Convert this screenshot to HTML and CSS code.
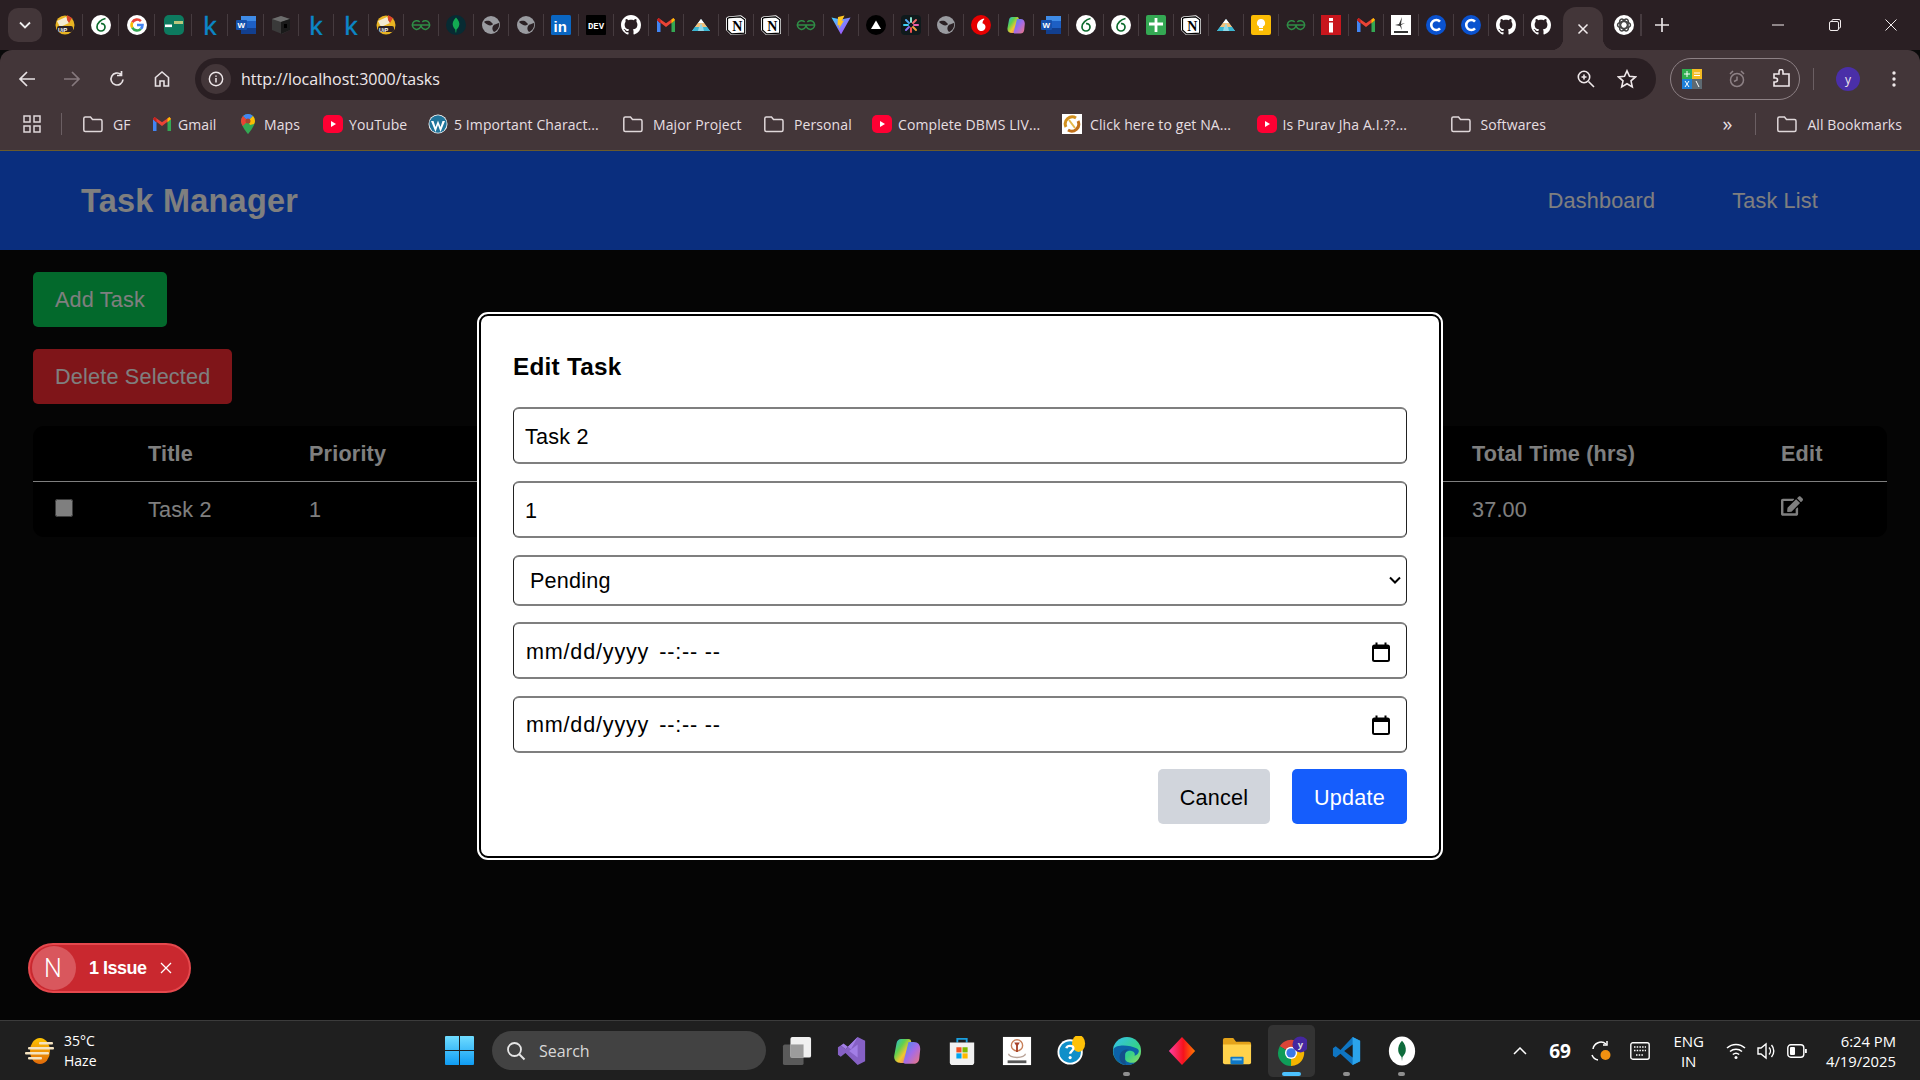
FILE: index.html
```html
<!DOCTYPE html>
<html lang="en">
<head>
<meta charset="utf-8">
<title>Task Manager</title>
<link rel="stylesheet" href="styles.css">
</head>
<body>
<svg class="defs" width="0" height="0" aria-hidden="true">
  <defs>
    <linearGradient id="g-copilot" x1="0" y1="0" x2="1" y2="1"><stop offset="0" stop-color="#1fb6e8"/><stop offset=".35" stop-color="#5fd04f"/><stop offset=".6" stop-color="#f3c530"/><stop offset="1" stop-color="#e0528f"/></linearGradient>
    <linearGradient id="g-copilot2" x1="0" y1="0" x2="1" y2="1"><stop offset="0" stop-color="#3a8df0"/><stop offset=".5" stop-color="#a36be8"/><stop offset="1" stop-color="#f0767a"/></linearGradient>
    <linearGradient id="g-vite" x1="0" y1="0" x2="1" y2="1"><stop offset="0" stop-color="#41d1ff"/><stop offset="1" stop-color="#bd34fe"/></linearGradient>
    <linearGradient id="g-diamond" x1="0" y1="0" x2="1" y2="0"><stop offset="0" stop-color="#ff3fa4"/><stop offset=".55" stop-color="#f5121d"/><stop offset="1" stop-color="#ff7a00"/></linearGradient>
    <linearGradient id="g-edge" x1="0" y1="0" x2="1" y2="1"><stop offset="0" stop-color="#35c1f1"/><stop offset=".6" stop-color="#34d08a"/><stop offset="1" stop-color="#9ee05a"/></linearGradient>
    <linearGradient id="g-win" x1="0" y1="0" x2="0" y2="1"><stop offset="0" stop-color="#6fdcff"/><stop offset="1" stop-color="#0f9cf3"/></linearGradient>
    <linearGradient id="g-sun" x1="0" y1="0" x2="0" y2="1"><stop offset="0" stop-color="#ffc400"/><stop offset="1" stop-color="#e0690b"/></linearGradient>
    <symbol id="i-ui" viewBox="0 0 20 20"><circle cx="10" cy="10" r="9.5" fill="#e9b422"/><path d="M2 6l9-4 3 6-9 4z" fill="#f3ead2"/><path d="M12 0l5 3-3 5-2-3z" fill="#d8432a"/><rect x="2" y="11" width="16" height="6" rx="2" fill="#2b2024"/><text x="3" y="16.5" class="t-ui">UiP</text></symbol>
    <symbol id="i-leaf" viewBox="0 0 20 20"><circle cx="10" cy="10" r="10" fill="#fff"/><path d="M14.5 3.5C10 4.5 6 8 6 12a4 4 0 1 0 8 0c0-2.2-1.8-3.800-4-3.300" fill="none" stroke="#0d6b2e" stroke-width="1.700"/></symbol>
    <symbol id="i-google" viewBox="0 0 20 20"><circle cx="10" cy="10" r="10" fill="#fff"/><g fill="none" stroke-width="2.600"><path d="M5.300 7.300A5.500 5.500 0 0 1 13.900 6.100" stroke="#ea4335"/><path d="M5.300 7.300A5.500 5.500 0 0 0 5.300 12.700" stroke="#fbbc05"/><path d="M5.300 12.700A5.500 5.500 0 0 0 13.900 13.900" stroke="#34a853"/><path d="M13.900 13.900A5.500 5.500 0 0 0 15.500 10H10" stroke="#4285f4"/></g></symbol>
    <symbol id="i-green" viewBox="0 0 20 20"><rect width="20" height="20" rx="5" fill="#0d7a5f"/><rect x="1" y="9.500" width="7" height="2.600" fill="#fff"/><rect x="10" y="6" width="9" height="3" fill="#b9c77e"/></symbol>
    <symbol id="i-k" viewBox="0 0 20 20"><text x="3.500" y="19.500" class="t-k">k</text></symbol>
    <symbol id="i-word" viewBox="0 0 20 20"><rect x="5" y="1" width="15" height="18" rx="1" fill="#1d5fc4"/><rect x="5" y="1" width="15" height="5" fill="#3f8be6"/><rect x="5" y="13" width="15" height="6" fill="#123f8f"/><rect y="5" width="11" height="10" rx="1" fill="#1551ad"/><text x="1.500" y="13" class="t-w">W</text></symbol>
    <symbol id="i-cube" viewBox="0 0 20 20"><path d="M10 1l9 3v11l-8 4-10-4V4z" fill="#3a3a3a"/><path d="M1 4l9 3 9-3-9-3z" fill="#6d6d6d"/><path d="M10 7v12l9-4V4z" fill="#1a1a1a"/><rect x="13" y="9" width="3" height="4" fill="#000"/></symbol>
    <symbol id="i-gfg" viewBox="0 0 20 20"><g fill="none" stroke="#2f8d46" stroke-width="1.500"><path d="M2 10h16"/><path d="M10 10a4.300 4.300 0 1 1-1.300-3"/><path d="M10 10a4.300 4.300 0 1 0 1.300-3"/></g></symbol>
    <symbol id="i-mongo" viewBox="0 0 20 20"><circle cx="10" cy="10" r="10" fill="#072b33"/><path d="M10 2.500c3 3 4 6 3 8.500-.6 1.800-2 3-2.500 3.500l-.3 3h-.6l-.3-3C8.800 14 7.600 12.800 7 11c-1-2.500 0-5.500 3-8.500z" fill="#13aa52"/></symbol>
    <symbol id="i-globe" viewBox="0 0 20 20"><circle cx="10" cy="10" r="9" fill="#9a9ba0"/><path d="M3 7c3-2 6-1 7 0s3 2 1 3-5 0-8-3zM18 8c-2 1-5 1-6 3s-1 4 1 6c3-1 6-5 5-9z" fill="#2b2024"/></symbol>
    <symbol id="i-in" viewBox="0 0 20 20"><rect width="20" height="20" rx="1.500" fill="#0a66c2"/><text x="2.500" y="16.500" class="t-in">in</text></symbol>
    <symbol id="i-dev" viewBox="0 0 20 20"><rect width="20" height="20" rx="1" fill="#000"/><text x="10" y="13.500" class="t-dev">DEV</text></symbol>
    <symbol id="i-gh" viewBox="0 0 16 16"><path fill="#fff" d="M8 0C3.58 0 0 3.58 0 8c0 3.54 2.29 6.53 5.47 7.59.4.07.55-.17.55-.38 0-.19-.01-.82-.01-1.49-2.01.37-2.53-.49-2.69-.94-.09-.23-.48-.94-.82-1.13-.28-.15-.68-.52-.01-.53.63-.01 1.08.58 1.23.82.72 1.21 1.87.87 2.33.66.07-.52.28-.87.51-1.07-1.78-.2-3.64-.89-3.64-3.95 0-.87.31-1.59.82-2.15-.08-.2-.36-1.02.08-2.12 0 0 .67-.21 2.2.82.64-.18 1.32-.27 2-.27.68 0 1.36.09 2 .27 1.53-1.04 2.2-.82 2.2-.82.44 1.1.16 1.92.08 2.12.51.56.82 1.27.82 2.15 0 3.07-1.87 3.75-3.65 3.95.29.25.54.73.54 1.48 0 1.07-.01 1.93-.01 2.2 0 .21.15.46.55.38A8.013 8.013 0 0016 8c0-4.42-3.58-8-8-8z"/></symbol>
    <symbol id="i-gmail" viewBox="0 0 20 20"><path d="M1 5v12h3.500V8.500z" fill="#4285f4"/><path d="M19 5v12h-3.500V8.500z" fill="#34a853"/><path d="M1 5l9 7 9-7-1.500-2L10 8.300 2.500 3z" fill="#ea4335"/><path d="M1 5l1.500-2 2 1.500v4z" fill="#c5221f"/><path d="M19 5l-1.500-2-2 1.500v4z" fill="#fbbc04"/></symbol>
    <symbol id="i-pyr" viewBox="0 0 20 20"><path d="M10 4l9 12H1z" fill="#8fd8e8"/><path d="M10 4l3 4H7z" fill="#fff"/><path d="M7 8h3l-1.500 4H4zM13 8l3 4h-4.500L10 8z" fill="#f3c07a"/><path d="M1 16h6l1-4H4zM19 16h-6l-1-4h4z" fill="#39b6d2"/></symbol>
    <symbol id="i-notion" viewBox="0 0 20 20"><path d="M2 1.500L15 .3 20 4v15l-15 1-5-5V3z" fill="#fff"/><path d="M3.300 2.700L14.500 1.800 18.700 4.700v13.400l-13 .8L1.500 15V3.500z" fill="#fff" stroke="#000" stroke-width="1.200"/><text x="11.300" y="16" class="t-n">N</text></symbol>
    <symbol id="i-vite" viewBox="0 0 20 20"><path d="M.5 2.500L10 19.500l9.500-17-9.500 2z" fill="url(#g-vite)"/><path d="M13.500.500L7 2l-.5 8.500 2-.5-.5 3.500 5-8-2.200.4z" fill="#ffc61f"/></symbol>
    <symbol id="i-tri" viewBox="0 0 20 20"><circle cx="10" cy="10" r="10" fill="#000"/><path d="M10 5.500l5 8.500H5z" fill="#fff"/></symbol>
    <symbol id="i-ast" viewBox="0 0 20 20"><rect width="20" height="20" rx="4" fill="#0f1a1c"/><g stroke-width="2" stroke-linecap="round"><path d="M10 3v4" stroke="#8be3d0"/><path d="M10 13v4" stroke="#ef4f4f"/><path d="M3 10h4" stroke="#3fd0f5"/><path d="M13 10h4" stroke="#e75fae"/><path d="M5 5l3 3" stroke="#54a7f0"/><path d="M12 12l3 3" stroke="#f0a43f"/><path d="M15 5l-3 3" stroke="#f26d6d"/><path d="M8 12l-3 3" stroke="#8d6ff0"/></g></symbol>
    <symbol id="i-voda" viewBox="0 0 20 20"><circle cx="10" cy="10" r="10" fill="#e60000"/><path d="M13.200 3.500C10 4 6 6.500 6 11c0 3 2 5 4.500 5 2.300 0 4-1.700 4-4 0-2.200-1.500-3.300-3-3.800 0-1.800 1-3.200 1.700-3.700z" fill="#fff"/></symbol>
    <symbol id="i-cop" viewBox="0 0 20 20"><path d="M6 2h5c1 0 1.500.5 1.800 1.500L9 18H6c-3 0-5-2-4.500-5L3 5c.3-2 1.500-3 3-3z" fill="url(#g-copilot)"/><path d="M11 4h3.500c3 0 4.500 2 4.300 5l-.6 6c-.3 2.500-1.700 3.500-3.700 3.500H9c-1 0-1.600-.6-1.300-1.500z" fill="url(#g-copilot2)"/></symbol>
    <symbol id="i-plus" viewBox="0 0 20 20"><rect width="20" height="20" rx="2" fill="#34a853"/><path d="M10 3v14M3 9h14" stroke="#fff" stroke-width="2.800"/></symbol>
    <symbol id="i-keep" viewBox="0 0 20 20"><rect width="20" height="20" rx="2" fill="#fbbc04"/><path d="M10 4a4 4 0 0 0-2 7.500V13h4v-1.500A4 4 0 0 0 10 4zM8 14h4v1.500H8z" fill="#fff"/></symbol>
    <symbol id="i-info" viewBox="0 0 20 20"><rect width="20" height="20" fill="#c8161d"/><rect x="8" y="3" width="4" height="3" fill="#fff"/><rect x="8" y="7.500" width="4" height="10" fill="#fff"/></symbol>
    <symbol id="i-reu" viewBox="0 0 20 20"><rect width="20" height="20" fill="#fff"/><path d="M11 2L8 9l-4 1 5 1 2 4-1-5 4-2-4 1z" fill="#333"/><rect x="3" y="16" width="14" height="2" fill="#333"/></symbol>
    <symbol id="i-c" viewBox="0 0 20 20"><circle cx="10" cy="10" r="10" fill="#0a52cf"/><path d="M14 6.700A5 5 0 1 0 14 13.300" fill="none" stroke="#fff" stroke-width="2.600"/></symbol>
    <symbol id="i-oai" viewBox="0 0 20 20"><circle cx="10" cy="10" r="10" fill="#fff"/><g fill="none" stroke="#444" stroke-width="1.500"><ellipse cx="10" cy="10" rx="6.500" ry="3.400"/><ellipse cx="10" cy="10" rx="6.500" ry="3.400" transform="rotate(60 10 10)"/><ellipse cx="10" cy="10" rx="6.500" ry="3.400" transform="rotate(120 10 10)"/></g></symbol>
    <symbol id="i-folder" viewBox="0 0 20 18"><path d="M.8 3.500A1.500 1.500 0 0 1 2.300 2h5.200l2 2.500H17.500A1.500 1.500 0 0 1 19 6v9a1.500 1.500 0 0 1-1.500 1.500H2.300A1.500 1.500 0 0 1 .8 15z" fill="none" stroke="#e0d8da" stroke-width="1.500"/></symbol>
    <symbol id="i-yt" viewBox="0 0 20 20"><rect x="0" y="1" width="20" height="18" rx="5" fill="#ff0033"/><path d="M8 7l5 3-5 3z" fill="#fff"/></symbol>
    <symbol id="i-calendar" viewBox="0 0 18 20"><rect x="1" y="3.500" width="16" height="15.500" rx="1.500" fill="none" stroke="#000" stroke-width="2"/><rect x="1" y="3" width="16" height="4" fill="#000"/><rect x="3.500" y="0.500" width="2" height="4" fill="#000"/><rect x="12.500" y="0.500" width="2" height="4" fill="#000"/></symbol>
  </defs>
</svg>

<header class="browser">
  <div class="tabstrip">
    <button class="tabsearch" aria-label="Search tabs"><svg viewBox="0 0 12 8" width="12" height="8"><path d="M1 1.500l5 5 5-5" fill="none" stroke="#eee" stroke-width="1.800"/></svg></button>
    <div class="tabs">
      <span class="tab tab-wide"><svg class="fav"><use href="#i-ui"/></svg></span>
      <span class="tab tab-wide"><svg class="fav"><use href="#i-leaf"/></svg></span>
      <span class="tab tab-wide"><svg class="fav"><use href="#i-google"/></svg></span>
      <span class="tab tab-wide"><svg class="fav"><use href="#i-green"/></svg></span>
      <span class="tab tab-wide"><svg class="fav"><use href="#i-k"/></svg></span>
      <span class="tab tab-wide"><svg class="fav"><use href="#i-word"/></svg></span>
      <span class="tab"><svg class="fav"><use href="#i-cube"/></svg></span>
      <span class="tab"><svg class="fav"><use href="#i-k"/></svg></span>
      <span class="tab"><svg class="fav"><use href="#i-k"/></svg></span>
      <span class="tab"><svg class="fav"><use href="#i-ui"/></svg></span>
      <span class="tab"><svg class="fav"><use href="#i-gfg"/></svg></span>
      <span class="tab"><svg class="fav"><use href="#i-mongo"/></svg></span>
      <span class="tab"><svg class="fav"><use href="#i-globe"/></svg></span>
      <span class="tab"><svg class="fav"><use href="#i-globe"/></svg></span>
      <span class="tab"><svg class="fav"><use href="#i-in"/></svg></span>
      <span class="tab"><svg class="fav"><use href="#i-dev"/></svg></span>
      <span class="tab"><svg class="fav"><use href="#i-gh"/></svg></span>
      <span class="tab"><svg class="fav"><use href="#i-gmail"/></svg></span>
      <span class="tab"><svg class="fav"><use href="#i-pyr"/></svg></span>
      <span class="tab"><svg class="fav"><use href="#i-notion"/></svg></span>
      <span class="tab"><svg class="fav"><use href="#i-notion"/></svg></span>
      <span class="tab"><svg class="fav"><use href="#i-gfg"/></svg></span>
      <span class="tab"><svg class="fav"><use href="#i-vite"/></svg></span>
      <span class="tab"><svg class="fav"><use href="#i-tri"/></svg></span>
      <span class="tab"><svg class="fav"><use href="#i-ast"/></svg></span>
      <span class="tab"><svg class="fav"><use href="#i-globe"/></svg></span>
      <span class="tab"><svg class="fav"><use href="#i-voda"/></svg></span>
      <span class="tab"><svg class="fav"><use href="#i-cop"/></svg></span>
      <span class="tab"><svg class="fav"><use href="#i-word"/></svg></span>
      <span class="tab"><svg class="fav"><use href="#i-leaf"/></svg></span>
      <span class="tab"><svg class="fav"><use href="#i-leaf"/></svg></span>
      <span class="tab"><svg class="fav"><use href="#i-plus"/></svg></span>
      <span class="tab"><svg class="fav"><use href="#i-notion"/></svg></span>
      <span class="tab"><svg class="fav"><use href="#i-pyr"/></svg></span>
      <span class="tab"><svg class="fav"><use href="#i-keep"/></svg></span>
      <span class="tab"><svg class="fav"><use href="#i-gfg"/></svg></span>
      <span class="tab"><svg class="fav"><use href="#i-info"/></svg></span>
      <span class="tab"><svg class="fav"><use href="#i-gmail"/></svg></span>
      <span class="tab"><svg class="fav"><use href="#i-reu"/></svg></span>
      <span class="tab"><svg class="fav"><use href="#i-c"/></svg></span>
      <span class="tab"><svg class="fav"><use href="#i-c"/></svg></span>
      <span class="tab"><svg class="fav"><use href="#i-gh"/></svg></span>
      <span class="tab tab-last"><svg class="fav"><use href="#i-gh"/></svg></span>
      <span class="tab-active"><svg viewBox="0 0 12 12" width="12" height="12"><path d="M1.500 1.500l9 9M10.500 1.500l-9 9" stroke="#f2eced" stroke-width="1.500"/></svg></span>
      <span class="tab tab-openai"><svg class="fav"><use href="#i-oai"/></svg></span>
      <span class="newtab"><svg viewBox="0 0 14 14" width="14" height="14"><path d="M7 0v14M0 7h14" stroke="#e8e2e4" stroke-width="1.700"/></svg></span>
    </div>
    <div class="winctl">
      <svg viewBox="0 0 12 12" width="12" height="12"><path d="M0 6h12" stroke="#f2eced" stroke-width="1"/></svg>
      <svg viewBox="0 0 12 12" width="12" height="12"><rect x=".5" y="2.500" width="9" height="9" rx="1.500" fill="none" stroke="#f2eced"/><path d="M3 2.500V1.500a1 1 0 0 1 1-1h6a1.500 1.500 0 0 1 1.500 1.500v6a1 1 0 0 1-1 1h-1" fill="none" stroke="#f2eced"/></svg>
      <svg viewBox="0 0 12 12" width="12" height="12"><path d="M.5.5l11 11M11.500.5l-11 11" stroke="#f2eced" stroke-width="1"/></svg>
    </div>
  </div>
  <div class="toolbar">
    <div class="navbtns">
      <svg viewBox="0 0 18 18" width="18" height="18"><path d="M17 9H2M9 2L2 9l7 7" fill="none" stroke="#e8e2e4" stroke-width="1.700"/></svg>
      <svg viewBox="0 0 18 18" width="18" height="18"><path d="M1 9h15M9 2l7 7-7 7" fill="none" stroke="#86797d" stroke-width="1.700"/></svg>
      <svg viewBox="0 0 18 18" width="18" height="18"><path d="M15 9.500A6 6 0 1 1 13 4.500M13.500 1v4.500H9" fill="none" stroke="#e8e2e4" stroke-width="1.700"/></svg>
      <svg viewBox="0 0 18 18" width="18" height="18"><path d="M2.500 16V7.500L9 2l6.500 5.500V16H11v-5H7v5z" fill="none" stroke="#e8e2e4" stroke-width="1.600"/></svg>
    </div>
    <div class="omnibox">
      <span class="siteinfo"><svg viewBox="0 0 18 18" width="16" height="16"><circle cx="9" cy="9" r="7.500" fill="none" stroke="#efe8ea" stroke-width="1.600"/><path d="M9 8v5M9 5v1.500" stroke="#efe8ea" stroke-width="1.700"/></svg></span>
      <span class="url">http://localhost:3000/tasks</span>
      <span class="omni-right">
        <svg viewBox="0 0 20 20" width="20" height="20"><circle cx="8" cy="8" r="5.700" fill="none" stroke="#efe8ea" stroke-width="1.600"/><path d="M12.500 12.500L18 18M5.500 8h5M8 5.500v5" stroke="#efe8ea" stroke-width="1.600"/></svg>
        <svg viewBox="0 0 20 20" width="20" height="20"><path d="M10 1.800l2.500 5.500 6 .6-4.500 4 1.300 6L10 14.800l-5.300 3.100 1.300-6-4.500-4 6-.6z" fill="none" stroke="#efe8ea" stroke-width="1.600"/></svg>
      </span>
    </div>
    <div class="extpill">
      <svg viewBox="0 0 20 20" width="20" height="20"><rect width="10" height="10" fill="#2fae4f"/><rect x="10" width="10" height="10" fill="#f4bb22"/><rect y="10" width="10" height="10" fill="#1d7fd6"/><rect x="10" y="10" width="10" height="10" fill="#5e6a72"/><path d="M2 5h6M5 2v6M12 4h6M12 6.500h6M3 12l4 6M7 12l-4 6M14 12l3 6" stroke="#fff" stroke-width="1"/></svg>
      <svg viewBox="0 0 20 20" width="20" height="20"><circle cx="10" cy="11" r="6.500" fill="none" stroke="#8d8185" stroke-width="1.500"/><path d="M3 5l3-3M17 5l-3-3M10 7.500V11l-3 1.500" fill="none" stroke="#8d8185" stroke-width="1.500"/></svg>
      <svg viewBox="0 0 20 20" width="20" height="20"><path d="M2 5h5V2.500a2 2 0 0 1 4 0V5h6v12H2v-4h1.500a2 2 0 0 0 0-4H2z" fill="none" stroke="#efe8ea" stroke-width="1.600"/></svg>
    </div>
    <span class="toolsep"></span>
    <span class="avatar">y</span>
    <svg class="dots" viewBox="0 0 4 18" width="4" height="18"><circle cx="2" cy="3" r="1.700" fill="#efe8ea"/><circle cx="2" cy="9" r="1.700" fill="#efe8ea"/><circle cx="2" cy="15" r="1.700" fill="#efe8ea"/></svg>
  </div>
  <div class="bookmarks">
    <svg class="apps" viewBox="0 0 18 18" width="18" height="18"><g fill="none" stroke="#e0d8da" stroke-width="1.500"><rect x="1" y="1" width="6" height="6"/><rect x="11" y="1" width="6" height="6"/><rect x="1" y="11" width="6" height="6"/><rect x="11" y="11" width="6" height="6"/></g></svg>
    <span class="bmsep"></span>
    <a class="bm bm-folder bm-gf"><svg class="bmi"><use href="#i-folder"/></svg>GF</a>
    <a class="bm bm-gmail"><svg class="bmi"><use href="#i-gmail"/></svg>Gmail</a>
    <a class="bm bm-maps"><svg class="bmi" viewBox="0 0 20 20"><path d="M10 0a7 7 0 0 0-7 7c0 5 7 13 7 13s7-8 7-13a7 7 0 0 0-7-7z" fill="#34a853"/><path d="M10 0a7 7 0 0 0-5 2l5 5 5-5a7 7 0 0 0-5-2z" fill="#4285f4"/><path d="M3 7c0 1.500.8 3.300 1.800 5L10 7 5 2a7 7 0 0 0-2 5z" fill="#ea4335"/><path d="M15 2l-5 5 2 4 4-1c.6-1 1-2 1-3a7 7 0 0 0-2-5z" fill="#fbbc04"/><circle cx="10" cy="7" r="2.500" fill="#a8452f"/></svg>Maps</a>
    <a class="bm bm-yt"><svg class="bmi"><use href="#i-yt"/></svg>YouTube</a>
    <a class="bm bm-wp"><svg class="bmi" viewBox="0 0 20 20"><circle cx="10" cy="10" r="9.500" fill="#fff"/><circle cx="10" cy="10" r="8.700" fill="#21759b"/><path d="M3 7l4.500 11L10 11l2.500 7L17 7h-2.500l-2 6L10 6.500 7.500 13l-2-6z" fill="#fff"/></svg>5 Important Charact...</a>
    <a class="bm bm-folder bm-major"><svg class="bmi"><use href="#i-folder"/></svg>Major Project</a>
    <a class="bm bm-folder bm-personal"><svg class="bmi"><use href="#i-folder"/></svg>Personal</a>
    <a class="bm bm-dbms"><svg class="bmi"><use href="#i-yt"/></svg>Complete DBMS LIV...</a>
    <a class="bm bm-nat"><svg class="bmi" viewBox="0 0 20 20"><rect width="20" height="20" fill="#fff"/><path d="M4 13A7 7 0 0 1 14 4" fill="none" stroke="#d2901e" stroke-width="3"/><path d="M16 7A7 7 0 0 1 6 16" fill="none" stroke="#c0701a" stroke-width="3"/><path d="M7 6l6 8" stroke="#e6b84a" stroke-width="2"/></svg>Click here to get NA...</a>
    <a class="bm bm-purav"><svg class="bmi"><use href="#i-yt"/></svg>Is Purav Jha A.I.??...</a>
    <a class="bm bm-folder bm-soft"><svg class="bmi"><use href="#i-folder"/></svg>Softwares</a>
    <span class="bmmore">»</span>
    <span class="bmsep"></span>
    <a class="bm bm-folder bm-all"><svg class="bmi"><use href="#i-folder"/></svg>All Bookmarks</a>
  </div>
</header>

<div class="viewport">
  <nav class="appnav">
    <span class="logo">Task Manager</span>
    <span class="navlinks"><a>Dashboard</a><a>Task List</a></span>
  </nav>
  <main class="main">
    <button class="btn btn-add">Add Task</button>
    <button class="btn btn-del">Delete Selected</button>
    <div class="table">
      <div class="row row-head">
        <span></span><span>Title</span><span>Priority</span><span>Total Time (hrs)</span><span class="col-edit">Edit</span>
      </div>
      <div class="row row-body">
        <span><input class="check" type="checkbox"></span><span>Task 2</span><span>1</span><span>37.00</span>
        <span class="col-edit"><svg class="edit" viewBox="0 0 576 512"><path fill="#fff" d="M402.6 83.2l90.2 90.2c3.8 3.8 3.8 10 0 13.8L274.4 405.6l-92.8 10.3c-12.4 1.4-22.9-9.1-21.5-21.5l10.3-92.8L388.8 83.2c3.8-3.8 10-3.8 13.8 0zm162-22.9l-48.8-48.8c-15.2-15.2-39.9-15.2-55.2 0l-35.4 35.4c-3.8 3.8-3.8 10 0 13.8l90.2 90.2c3.8 3.8 10 3.8 13.8 0l35.4-35.4c15.2-15.3 15.2-40 0-55.2zM384 346.2V448H64V128h229.8c3.2 0 6.2-1.3 8.5-3.5l40-40c7.6-7.6 2.2-20.5-8.5-20.5H48C21.5 64 0 85.5 0 112v352c0 26.5 21.5 48 48 48h352c26.5 0 48-21.5 48-48V306.2c0-10.7-12.9-16-20.5-8.5l-40 40c-2.2 2.3-3.5 5.3-3.5 8.5z"/></svg></span>
      </div>
    </div>
  </main>
  <div class="overlay">
    <form class="modal">
      <h2 class="modal-title">Edit Task</h2>
      <input class="field field-first" type="text" value="Task 2">
      <input class="field" type="number" value="1">
      <select class="field field-select"><option>Pending</option></select>
      <div class="field field-date"><span>mm/dd/yyyy</span><span class="date-time">--:-- --</span><svg class="calendar"><use href="#i-calendar"/></svg></div>
      <div class="field field-date"><span>mm/dd/yyyy</span><span class="date-time">--:-- --</span><svg class="calendar"><use href="#i-calendar"/></svg></div>
      <div class="modal-actions">
        <button type="button" class="mbtn mbtn-cancel">Cancel</button>
        <button type="button" class="mbtn mbtn-update">Update</button>
      </div>
    </form>
  </div>
  <div class="issue">
    <span class="issue-n">N</span>
    <span class="issue-text">1 Issue</span>
    <svg viewBox="0 0 12 12" width="12" height="12"><path d="M1 1l10 10M11 1L1 11" stroke="#fff" stroke-width="1.300"/></svg>
  </div>
</div>

<footer class="taskbar">
  <div class="weather">
    <svg viewBox="0 0 30 26" width="30" height="26"><ellipse cx="15" cy="13" rx="10" ry="13" fill="url(#g-sun)"/><g fill="#f5e3c0"><rect x="14" y="4" width="14" height="2.500" rx="1"/><rect x="3" y="9" width="26" height="2.500" rx="1"/><rect y="14" width="24" height="2.500" rx="1"/><rect x="3" y="19" width="14" height="2.500" rx="1"/></g></svg>
    <span class="weather-text"><span>35°C</span><span>Haze</span></span>
  </div>
  <div class="tb-center">
    <svg class="win" viewBox="0 0 29 29" width="29" height="29"><path d="M1 0h13v14H0V1a1 1 0 0 1 1-1zM15 0h13a1 1 0 0 1 1 1v13H15zM0 15h14v14H1a1 1 0 0 1-1-1zM15 15h14v13a1 1 0 0 1-1 1H15z" fill="url(#g-win)"/></svg>
    <div class="search">
      <svg viewBox="0 0 20 20" width="20" height="20"><circle cx="8.500" cy="8.500" r="6.500" fill="none" stroke="#e6e6e6" stroke-width="1.800"/><path d="M13 13l5.500 5.500" stroke="#e6e6e6" stroke-width="2"/></svg>
      <span>Search</span>
    </div>
    <span class="app"><svg viewBox="0 0 32 32"><rect x="1" y="9" width="22" height="22" rx="2" fill="#5a5a5a"/><rect x="9" y="1" width="22" height="22" rx="2" fill="#f0f0f0"/><rect x="9" y="9" width="14" height="14" fill="#9c9c9c"/></svg></span>
    <span class="app"><svg viewBox="0 0 32 32"><path d="M22 1l8 4v22l-8 4L9 18l-5 4-3-2V12l3-2 5 4z" fill="#8661c5"/><path d="M22 1L9 14l-5-4 3-2 8 6zM22 9v14l-9-7z" fill="#a27ee6"/></svg></span>
    <span class="app"><svg viewBox="0 0 20 20"><use href="#i-cop"/></svg></span>
    <span class="app"><svg viewBox="0 0 32 32"><path d="M11 7V3h10v4" fill="none" stroke="#1aa0e0" stroke-width="2"/><path d="M3 7h26v21a3 3 0 0 1-3 3H6a3 3 0 0 1-3-3z" fill="#f1f1f1"/><rect x="10" y="12" width="5.500" height="5.500" fill="#f25022"/><rect x="16.500" y="12" width="5.500" height="5.500" fill="#7fba00"/><rect x="10" y="18.500" width="5.500" height="5.500" fill="#00a4ef"/><rect x="16.500" y="18.500" width="5.500" height="5.500" fill="#ffb900"/></svg></span>
    <span class="app"><svg viewBox="0 0 32 32"><rect x="1" y="1" width="30" height="30" fill="#fff"/><circle cx="16" cy="10" r="6" fill="none" stroke="#c8805a" stroke-width="1.500"/><path d="M13 7h6l-2 3v7h-2v-7z" fill="#a8432a"/><path d="M7 19a9 4 0 0 0 18 0" fill="none" stroke="#b9a398" stroke-width="1.500"/><rect x="6" y="26" width="20" height="3" fill="#555"/></svg></span>
    <span class="app"><svg viewBox="0 0 32 32"><circle cx="14" cy="17" r="13.500" fill="#fff"/><circle cx="14" cy="17" r="11.500" fill="#0f8fc9"/><ellipse cx="23" cy="8" rx="7" ry="9" fill="#ffc107"/><path d="M10 13c.5-3 7-3.500 7.500 0 .3 2.500-3.500 3-3.500 6" fill="none" stroke="#fff" stroke-width="2.500"/><circle cx="14" cy="23" r="1.700" fill="#fff"/></svg></span>
    <span class="app app-run"><svg viewBox="0 0 32 32"><circle cx="16" cy="16" r="15" fill="url(#g-edge)"/><path d="M1.500 14C0 25 9 31 16 31c4 0 7-1 9-3-7 2-11-1-12-5-1-5 4-8 8-7 3 .7 4 3 3 5 4-1 7-6 2-8-6-3-21-5-24.500 1z" fill="#0c62a8"/><path d="M14 21c0-5 3-7 7-6-6-2-13 0-13 8 0 4 3 7 7 8-1-3-1-6-1-10z" fill="#134f8a"/></svg><i class="run-dot"></i></span>
    <span class="app"><svg viewBox="0 0 32 32"><path d="M16 1l14 15-14 15L2 16z" fill="url(#g-diamond)"/></svg></span>
    <span class="app"><svg viewBox="0 0 32 32"><path d="M1 4a2 2 0 0 1 2-2h9l3 4h14a2 2 0 0 1 2 2v4H1z" fill="#e3a21a"/><path d="M1 9h30v19a2 2 0 0 1-2 2H3a2 2 0 0 1-2-2z" fill="#ffd24c"/><rect x="9" y="22" width="14" height="8" rx="1" fill="#0f78c7"/><rect x="11" y="24" width="10" height="2" fill="#7fc8f0"/></svg></span>
    <span class="app app-chrome">
      <svg viewBox="0 0 32 32"><g fill="none" stroke-width="9"><circle cx="15" cy="18" r="9.500" stroke="#db4437" stroke-dasharray="19.900 39.800" transform="rotate(-150 15 18)"/><circle cx="15" cy="18" r="9.500" stroke="#f4b400" stroke-dasharray="19.900 39.800" transform="rotate(-30 15 18)"/><circle cx="15" cy="18" r="9.500" stroke="#0f9d58" stroke-dasharray="19.900 39.800" transform="rotate(90 15 18)"/></g><circle cx="15" cy="18" r="6.500" fill="#fff"/><circle cx="15" cy="18" r="5" fill="#3b78e7"/><circle cx="25" cy="9" r="8.500" fill="#4527a0"/><text x="25" y="12.500" class="t-y">y</text></svg>
      <i class="active-bar"></i>
    </span>
    <span class="app app-run"><svg viewBox="0 0 32 32"><path d="M22 1l8 4v22l-8 4-13-12-5 4-3-2v-8l3-2 5 4z" fill="#0f75c2"/><path d="M22 1l8 4v22l-8 4z" fill="#2ba4ec"/><path d="M22 9v14l-9-7z" fill="#1e1e1e"/></svg><i class="run-dot"></i></span>
    <span class="app app-run"><svg viewBox="0 0 32 32"><ellipse cx="16" cy="16" rx="14" ry="15.500" fill="#fff"/><path d="M16 5c3 3 4.500 7 4 11-.4 3-2.500 5-3.500 6.500L16 27l-.5-4.500C14.500 21 12.400 19 12 16c-.5-4 1-8 4-11z" fill="#0e6b3c"/></svg><i class="run-dot"></i></span>
  </div>
  <div class="tray">
    <svg class="tray-chev" viewBox="0 0 14 8" width="14" height="8"><path d="M1 7l6-6 6 6" fill="none" stroke="#fff" stroke-width="1.500"/></svg>
    <span class="tray-num">69</span>
    <svg class="tray-i" viewBox="0 0 22 24" width="22" height="24"><path d="M3 10a8 8 0 0 1 13-5M2 16a8 8 0 0 0 6 5" fill="none" stroke="#fff" stroke-width="1.500"/><path d="M17 2v4h-4" fill="none" stroke="#fff" stroke-width="1.500"/><circle cx="15.500" cy="16" r="5" fill="#f29111"/></svg>
    <svg class="tray-i" viewBox="0 0 20 18" width="20" height="18"><rect x=".8" y=".8" width="18.400" height="16.400" rx="2" fill="none" stroke="#fff" stroke-width="1.400"/><path d="M4 5h12M4 8.500h12M6 13h8" stroke="#fff" stroke-width="1.500" stroke-dasharray="1.500 1.200"/></svg>
    <span class="tray-lang"><span>ENG</span><span>IN</span></span>
    <svg class="tray-wifi" viewBox="0 0 20 18" width="20" height="18"><path d="M1 6a13 13 0 0 1 18 0M4 9.500a9 9 0 0 1 12 0M6.800 12.500a5 5 0 0 1 6.400 0" fill="none" stroke="#fff" stroke-width="1.500"/><circle cx="10" cy="15.500" r="1.500" fill="#fff"/></svg>
    <svg class="tray-vol" viewBox="0 0 20 20" width="20" height="20"><path d="M2 7v6h3l5 4V3L5 7z" fill="none" stroke="#fff" stroke-width="1.400"/><path d="M13 6.500a5 5 0 0 1 0 7M15.500 4a9 9 0 0 1 0 12" fill="none" stroke="#fff" stroke-width="1.400"/></svg>
    <svg class="tray-bat" viewBox="0 0 20 14" width="20" height="14"><rect x=".8" y=".8" width="16" height="12.400" rx="3" fill="none" stroke="#fff" stroke-width="1.400"/><rect x="3" y="3" width="5" height="8" rx="1" fill="#fff"/><rect x="18" y="5" width="1.800" height="4" fill="#fff"/></svg>
    <span class="clock"><span>6:24 PM</span><span>4/19/2025</span></span>
  </div>
</footer>
</body>
</html>
```

FILE: styles.css
```css
* { box-sizing: border-box; }
html, body { margin: 0; padding: 0; }
body {
  width: 1920px;
  height: 1080px;
  overflow: hidden;
  display: flex;
  flex-direction: column;
  background: #0a0a0a;
  font-family: "Liberation Sans", Arial, sans-serif;
  color: #fff;
}
.defs { position: absolute; }
.t-ui { font: 700 5.5px "Liberation Sans", sans-serif; fill: #fff; }
.t-k { font: 400 26px "Liberation Sans", sans-serif; fill: #0b87c6; stroke: #0b87c6; stroke-width: .4px; }
.t-w { font: 700 8px "Liberation Sans", sans-serif; fill: #fff; }
.t-in { font: 700 15px "Liberation Sans", sans-serif; fill: #fff; }
.t-dev { font: 700 9px "Liberation Mono", monospace; fill: #fff; text-anchor: middle; }
.t-n { font: 700 14px "Liberation Serif", serif; fill: #000; text-anchor: middle; }
.t-y { font: 700 10px "Open Sans", sans-serif; fill: #ddd; text-anchor: middle; }

/* browser chrome */
.browser { flex: none; font-family: "Open Sans", sans-serif; }
.tabstrip {
  height: 50px;
  display: flex;
  align-items: flex-start;
  background: #2a1f23;
}
.tabsearch {
  flex: none;
  width: 34px;
  height: 34px;
  margin: 8px 0 0 8px;
  padding: 0;
  border: 0;
  border-radius: 10px;
  background: #433639;
  display: flex;
  align-items: center;
  justify-content: center;
}
.tabs { display: flex; margin-left: 5px; height: 50px; align-items: stretch; }
.tab {
  flex: none;
  width: 35px;
  display: flex;
  align-items: center;
  justify-content: center;
  background: linear-gradient(#463b3f, #463b3f) right -1px center / 2px 22px no-repeat;
}
.tab-wide { width: 36.17px; }
.tab-last { background: none; }
.fav { width: 20px; height: 20px; display: block; }
.tab-active {
  flex: none;
  width: 40px;
  margin: 7px 3px 0 4.5px;
  border-radius: 13px 13px 0 0;
  background: #433639;
  display: flex;
  align-items: center;
  justify-content: center;
  position: relative;
}
.tab-active::before, .tab-active::after {
  content: "";
  position: absolute;
  bottom: 0;
  width: 12px;
  height: 12px;
}
.tab-active::before { left: -12px; background: radial-gradient(circle at 0 0, #2a1f23 12px, #433639 12.500px); }
.tab-active::after { right: -12px; background: radial-gradient(circle at 100% 0, #2a1f23 12px, #433639 12.500px); }
.tab-openai { width: 36px; background: linear-gradient(#463b3f, #463b3f) right center / 2px 22px no-repeat; }
.newtab { flex: none; width: 40px; display: flex; align-items: center; justify-content: center; }
.winctl {
  margin-left: auto;
  width: 148px;
  height: 50px;
  padding: 0 23px 0 0;
  display: flex;
  align-items: center;
  justify-content: space-between;
}

.toolbar {
  height: 50px;
  background: #433639;
  border-radius: 12px 12px 0 0;
  display: flex;
  align-items: center;
  padding-top: 8px;
  color: #efe8ea;
}
.navbtns { width: 195px; flex: none; display: flex; padding: 0 0 0 18px; gap: 27px; }
.omnibox {
  width: 1461px;
  height: 42px;
  flex: none;
  border-radius: 21px;
  background: #2a1f23;
  display: flex;
  align-items: center;
  padding-left: 6px;
}
.siteinfo {
  width: 30px;
  height: 30px;
  border-radius: 50%;
  background: #433639;
  display: flex;
  align-items: center;
  justify-content: center;
}
.url { margin-left: 10px; font-size: 16px; color: #efe8ea; }
.omni-right { margin-left: auto; display: flex; gap: 21px; padding-right: 19px; }
.extpill {
  width: 130px;
  height: 42px;
  margin-left: 14px;
  flex: none;
  border: 1px solid #8d8185;
  border-radius: 21px;
  display: flex;
  align-items: center;
  justify-content: space-between;
  padding: 0 7px 0 11px;
}
.toolsep { width: 1px; height: 22px; background: #6b5f63; margin-left: 13px; }
.avatar {
  width: 24px;
  height: 24px;
  margin-left: 22px;
  border-radius: 50%;
  background: #4a2fa8;
  font-size: 12px;
  display: flex;
  align-items: center;
  justify-content: center;
}
.dots { margin-left: 32px; }

.bookmarks {
  height: 51px;
  background: #433639;
  border-bottom: 1px solid #6b5a2c;
  display: flex;
  align-items: center;
  padding: 0 18px 2px 23px;
  font-size: 14px;
  letter-spacing: .1px;
  color: #e6dfe1;
}
.apps { flex: none; }
.bmsep { width: 1px; height: 22px; background: #6b5f63; flex: none; margin: 0 21px 0 20px; }
.bm { display: flex; align-items: center; gap: 6px; white-space: nowrap; flex: none; }
.bm-folder { gap: 10px; }
.bmi { width: 20px; height: 20px; flex: none; display: block; }
.bm-gf { width: 69px; }
.bm-gmail { width: 86px; }
.bm-maps { width: 85px; }
.bm-yt { width: 105px; }
.bm-wp { width: 195px; }
.bm-major { width: 141px; }
.bm-personal { width: 108px; }
.bm-dbms { width: 190px; }
.bm-nat { width: 194.500px; gap: 8px; }
.bm-purav { width: 194px; }
.bmmore { margin-left: auto; width: 10px; font-size: 20px; line-height: 18px; margin-right: 3px; }

/* page */
.viewport { flex: 1; position: relative; overflow: hidden; min-height: 0; letter-spacing: .2px; }
.appnav {
  height: 99px;
  background: #155dfc;
  display: flex;
  align-items: center;
  justify-content: space-between;
  padding: 2px 102px 0 81px;
}
.logo { font-size: 32.4px; font-weight: 700; letter-spacing: .3px; }
.navlinks { display: flex; gap: 77px; font-size: 21.6px; margin-top: -2px; }
.main { padding: 21.6px 33px; display: flex; flex-direction: column; align-items: flex-start; gap: 22px; }
.btn {
  height: 55px;
  padding: 2px 22px 0;
  border: 0;
  border-radius: 5px;
  color: #fff;
  font: 21.6px "Liberation Sans", sans-serif;
  letter-spacing: .2px;
}
.btn-add { background: #06d258; }
.btn-del { background: #fe2a32; }
.table { width: 1854px; background: #000; border-radius: 11px; font-size: 21.6px; }
.row {
  display: grid;
  grid-template-columns: 93px 161px 1fr 310px 127px;
  height: 55px;
  align-items: center;
  padding-top: 2px;
}
.row > span { padding: 0 22px; }
.row > .col-edit { padding-left: 21px; }
.row-head { height: 56px; font-weight: 700; border-bottom: 1px solid #fff; }
.check { display: block; width: 18px; height: 18px; margin: -2px 0 2px; }
.edit { display: block; width: 22px; height: 20px; margin: -9px 0 0; }

.overlay {
  position: absolute;
  inset: 0;
  padding-top: 1px;
  background: rgba(0, 0, 0, .5);
  display: flex;
  align-items: center;
  justify-content: center;
}
.modal {
  width: 962px;
  height: 544px;
  padding: 32px;
  background: #fff;
  border: 2px solid #000;
  outline: 2px solid #fff;
  border-radius: 9px;
  color: #000;
  display: flex;
  flex-direction: column;
  gap: 16.5px;
  letter-spacing: .2px;
}
.modal-title { margin: 0 0 6px; padding-top: 1px; font-size: 24.3px; line-height: 35px; font-weight: 700; letter-spacing: .25px; }
.field {
  flex: none;
  width: 100%;
  height: 57px;
  padding: 2px 11px 0;
  background: #fff;
  color: #000;
  border-style: solid;
  border-width: 2px 1px;
  border-color: #7f7f7f #222;
  border-radius: 6px;
  font: 21.6px "Liberation Sans", sans-serif;
  letter-spacing: .2px;
}
.field-first { margin-bottom: 1px; padding-top: 3px; }
.field-select {
  height: 51px;
  padding: 0 16px;
  appearance: none;
  background: #fff url("data:image/svg+xml,%3Csvg xmlns='http://www.w3.org/2000/svg' width='12' height='8' viewBox='0 0 12 8'%3E%3Cpath d='M1 1.500l5 5 5-5' fill='none' stroke='%23000' stroke-width='2'/%3E%3C/svg%3E") no-repeat right 5px center;
}
.field-date { display: flex; align-items: center; padding-left: 12px; letter-spacing: .8px; }
.date-time { margin-left: 10px; }
.calendar { width: 18px; height: 20px; margin-left: auto; margin-right: 5px; display: block; }
.modal-actions { display: flex; justify-content: flex-end; gap: 22px; }
.mbtn {
  height: 55px;
  border: 0;
  border-radius: 5px;
  font: 21.6px "Liberation Sans", sans-serif;
  letter-spacing: .2px;
  padding: 2px 0 0;
}
.mbtn-cancel { width: 112px; background: #d1d5dc; color: #000; }
.mbtn-update { width: 115px; background: #155dfc; color: #fff; }

.issue {
  position: absolute;
  left: 28px;
  bottom: 27px;
  width: 163px;
  height: 50px;
  border: 2px solid #e5484d;
  border-radius: 25px;
  background: #c9282f;
  display: flex;
  align-items: center;
  padding-left: 2px;
  letter-spacing: 0;
}
.issue-n {
  width: 44px;
  height: 44px;
  border-radius: 50%;
  background: #d9575d;
  font: 300 25px Roboto, sans-serif;
  display: flex;
  align-items: center;
  justify-content: center;
  padding-right: 2px;
}
.issue-text { margin-left: 13px; font-size: 18px; font-weight: 700; letter-spacing: -.5px; }
.issue svg { margin-left: 13px; }

/* taskbar */
.taskbar {
  flex: none;
  height: 60px;
  background: #1f1f1f;
  border-top: 1px solid #3b3b3b;
  display: flex;
  align-items: center;
  font-family: "Open Sans", sans-serif;
  font-size: 14px;
}
.weather { width: 445px; flex: none; padding-left: 25px; display: flex; align-items: center; gap: 9px; }
.weather-text { display: flex; flex-direction: column; line-height: 20px; }
.tb-center { display: flex; align-items: center; }
.win { flex: none; margin-right: 18px; }
.search {
  width: 274px;
  height: 39px;
  flex: none;
  border-radius: 20px;
  background: #424242;
  display: flex;
  align-items: center;
  padding-left: 14px;
  gap: 13px;
  font-size: 16px;
  color: #d8d8d8;
  margin-right: 3px;
}
.app {
  flex: none;
  width: 55px;
  height: 52px;
  display: flex;
  align-items: center;
  justify-content: center;
  position: relative;
}
.app svg { width: 30px; height: 30px; display: block; }
.app-chrome { background: #333; border-radius: 5px; width: 47px; margin: 0 4px; }
.active-bar { position: absolute; bottom: 1px; left: 14px; width: 19px; height: 4px; border-radius: 2px; background: #4cc2ff; }
.run-dot { position: absolute; bottom: 1px; left: 24px; width: 7px; height: 4px; border-radius: 2px; background: #8f8f8f; }
.tray { margin-left: auto; display: flex; align-items: center; padding-right: 24px; }
.tray-chev { margin-right: 22px; }
.tray-num { font-size: 19px; font-weight: 700; margin-right: 19.500px; }
.tray-i { margin-right: 18px; }
.tray-lang { display: flex; flex-direction: column; align-items: center; font-size: 15px; line-height: 20px; margin: 0 22px 0 5px; }
.tray-wifi { margin-right: 10px; }
.tray-vol { margin-right: 11px; }
.tray-bat { margin-right: 19px; }
.clock { display: flex; flex-direction: column; align-items: flex-end; font-size: 14.8px; line-height: 20px; }
```
